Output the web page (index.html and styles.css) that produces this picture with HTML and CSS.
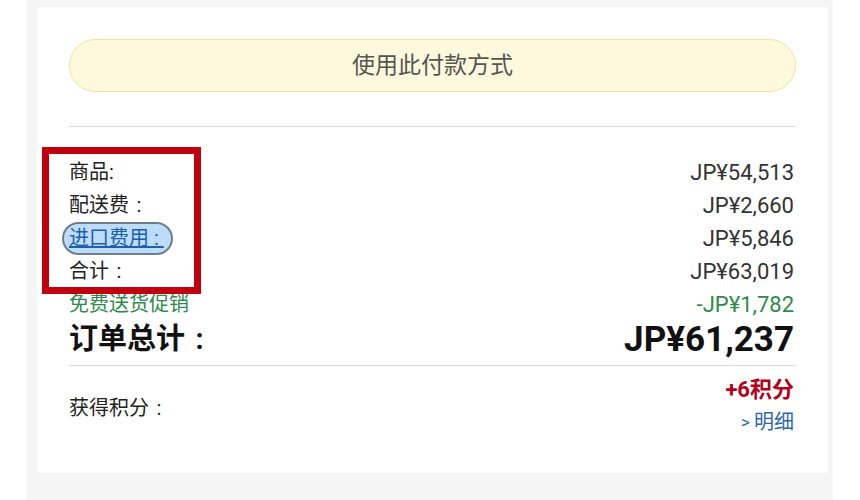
FILE: index.html
```html
<!DOCTYPE html>
<html lang="zh-CN">
<head>
<meta charset="utf-8">
<link rel="stylesheet" href="styles.css">
</head>
<body>
<div class="page">
  <div class="card">
    <div class="pay-btn">使用此付款方式</div>
    <div class="divider top-divider"></div>
    <div class="summary">
      <div class="row"><span class="label">商品:</span><span class="amt">JP¥54,513</span></div>
      <div class="row"><span class="label">配送费<span class="colon">:</span></span><span class="amt">JP¥2,660</span></div>
      <div class="row"><span class="label"><a class="hl-link" href="#">进口费用&nbsp;:&nbsp;</a></span><span class="amt">JP¥5,846</span></div>
      <div class="row"><span class="label">合计<span class="colon">:</span></span><span class="amt">JP¥63,019</span></div>
      <div class="row promo"><span class="label">免费送货促销</span><span class="amt">-JP¥1,782</span></div>
      <div class="row total"><span class="label">订单总计<span class="colon">:</span></span><span class="amt">JP¥61,237</span></div>
    </div>
    <div class="divider"></div>
    <div class="points">
      <span class="label">获得积分<span class="colon">:</span></span>
      <div class="points-right">
        <span class="pts">+6积分</span>
        <a class="detail" href="#"><span class="chev">&gt;</span>明细</a>
      </div>
    </div>
    <div class="annot"></div>
  </div>
</div>
</body>
</html>
```

FILE: styles.css
```css
html, body {
  margin: 0;
  padding: 0;
  background: #ffffff;
}
body {
  font-family: Roboto, "Noto Sans CJK SC", sans-serif;
  color: #222;
}
.page {
  margin-left: 27px;
  width: 806px;
  height: 500px;
  box-sizing: border-box;
  padding: 7px 5px 0 10px;
  background: #f5f5f5;
}
.card {
  position: relative;
  background: #ffffff;
  height: 466px;
  box-sizing: border-box;
  padding: 32px 32px 0 32px;
}
.pay-btn {
  height: 53px;
  box-sizing: border-box;
  border: 1px solid #f2e2a2;
  border-radius: 27px;
  background: #fef9dc;
  color: #555;
  font-size: 23px;
  line-height: 51px;
  text-align: center;
}
.divider {
  height: 1px;
  background: #d9d9d9;
}
.top-divider {
  margin-top: 34px;
}
.summary {
  padding-top: 29px;
}
.colon {
  display: inline-block;
  width: 1em;
  text-align: center;
}
.row {
  display: flex;
  justify-content: space-between;
  align-items: center;
  height: 33px;
  font-size: 20px;
  line-height: 33px;
  color: #222;
}
.row .amt {
  font-size: 22px;
  color: #333;
  padding-right: 2px;
}
.promo {
  color: #2f8a4c;
}
.promo .amt {
  color: #2f8a4c;
}
.total {
  height: 37px;
  line-height: 37px;
  margin-bottom: 7px;
}
.total .label {
  font-size: 29px;
  font-weight: bold;
  color: #111;
}
.total .amt {
  font-size: 35px;
  font-weight: bold;
  color: #111;
}
.hl-link {
  display: inline-block;
  height: 33px;
  box-sizing: border-box;
  margin-left: -7px;
  padding: 0 7px 0 5px;
  border: 2px solid #6f7e8c;
  border-radius: 17px;
  background: #bcdcfa;
  color: #1b5fae;
  line-height: 29px;
  text-decoration: underline;
}
.points {
  display: flex;
  justify-content: space-between;
  align-items: center;
  padding-top: 8px;
}
.points .label {
  font-size: 20px;
  color: #222;
}
.points-right {
  display: flex;
  flex-direction: column;
  align-items: flex-end;
  padding-right: 2px;
}
.pts {
  font-size: 22px;
  line-height: 32px;
  font-weight: bold;
  color: #b3001b;
}
.detail {
  font-size: 20px;
  line-height: 32px;
  color: #2d67a6;
  text-decoration: none;
}
.chev {
  font-size: 17px;
  margin-right: 4px;
  vertical-align: 1px;
}
.annot {
  position: absolute;
  left: 5px;
  top: 140px;
  width: 159px;
  height: 147px;
  box-sizing: border-box;
  border: 7px solid #c1000f;
  pointer-events: none;
}
```
